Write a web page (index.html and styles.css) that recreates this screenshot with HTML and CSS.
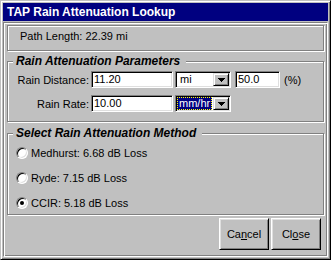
FILE: index.html
```html
<!DOCTYPE html>
<html>
<head>
<meta charset="utf-8">
<title>TAP Rain Attenuation Lookup</title>
<link rel="stylesheet" href="styles.css">
</head>
<body>
<div class="window">
  <div class="titlebar">TAP Rain Attenuation Lookup</div>
  <div class="client">
    <div class="path-panel">Path Length: 22.39 mi</div>
    <fieldset class="group group-params">
      <legend>Rain Attenuation Parameters</legend>
      <div class="row">
        <span class="lbl">Rain Distance:</span>
        <div class="edit edit-num">11.20</div>
        <div class="combo">
          <span class="combo-text">mi</span>
          <span class="drop"><svg width="7" height="4" viewBox="0 0 7 4" shape-rendering="crispEdges"><rect x="0" y="0" width="7" height="1"/><rect x="1" y="1" width="5" height="1"/><rect x="2" y="2" width="3" height="1"/><rect x="3" y="3" width="1" height="1"/></svg></span>
        </div>
        <div class="edit edit-pct">50.0</div>
        <span class="unit">(%)</span>
      </div>
      <div class="row row-second">
        <span class="lbl">Rain Rate:</span>
        <div class="edit edit-num">10.00</div>
        <div class="combo">
          <span class="combo-text"><span class="sel">mm/hr</span></span>
          <span class="drop"><svg width="7" height="4" viewBox="0 0 7 4" shape-rendering="crispEdges"><rect x="0" y="0" width="7" height="1"/><rect x="1" y="1" width="5" height="1"/><rect x="2" y="2" width="3" height="1"/><rect x="3" y="3" width="1" height="1"/></svg></span>
        </div>
      </div>
    </fieldset>
    <fieldset class="group group-method">
      <legend>Select Rain Attenuation Method</legend>
      <div class="radio-row"><span class="radio"></span><span>Medhurst: 6.68 dB Loss</span></div>
      <div class="radio-row"><span class="radio"></span><span>Ryde: 7.15 dB Loss</span></div>
      <div class="radio-row"><span class="radio checked"></span><span>CCIR: 5.18 dB Loss</span></div>
    </fieldset>
    <div class="buttons">
      <button class="btn">Ca<u>n</u>cel</button>
      <button class="btn">Cl<u>o</u>se</button>
    </div>
  </div>
</div>
</body>
</html>
```
FILE: styles.css
```css
* { box-sizing: border-box; }
html, body { margin: 0; padding: 0; }
body {
  width: 331px;
  height: 260px;
  overflow: hidden;
  background: #c0c0c0;
  font-family: "Liberation Sans", Arial, sans-serif;
  font-size: 11px;
  color: #000;
}
.window {
  width: 331px;
  height: 260px;
  background: #c0c0c0;
  border: 1px solid;
  border-color: #c0c0c0 #000 #000 #c0c0c0;
  box-shadow: inset 1px 1px #fff, inset -1px -1px #808080;
  padding: 2px;
  display: flex;
  flex-direction: column;
}
.titlebar {
  flex: none;
  height: 18px;
  background: #000080;
  color: #fff;
  font-weight: bold;
  font-size: 12px;
  line-height: 18px;
  padding-left: 4px;
}
.client {
  flex: 1;
  margin-top: 1px;
  border: 1px solid;
  border-color: #808080 #fff #fff #808080;
  box-shadow: inset 1px 1px #fff, inset -1px -1px #808080;
  padding: 2px 2px 0 3px;
  display: flex;
  flex-direction: column;
}
.path-panel {
  flex: none;
  height: 26px;
  margin-right: 1px;
  border: 1px solid #808080;
  box-shadow: inset 1px 1px #fff, 1px 1px #fff;
  padding-left: 12px;
  line-height: 20px;
}
.group {
  margin: 3px 1px 0 0;
  padding: 2px 0 9px 0;
  border: 1px solid #808080;
  box-shadow: inset 1px 1px #fff, 1px 1px #fff;
  min-width: 0;
}
.group legend {
  margin-left: 5px;
  padding: 0 6px 0 3px;
  font-weight: bold;
  font-style: italic;
  font-size: 12px;
  line-height: 15px;
  background: #c0c0c0;
}
.group-method {
  margin-top: 4px;
  padding: 3px 0 3px 0;
}
.row {
  display: flex;
  align-items: center;
  height: 17px;
}
.row-second { margin-top: 7px; }
.lbl {
  width: 81px;
  margin-right: 2px;
  text-align: right;
  white-space: nowrap;
}
.edit, .combo {
  height: 17px;
  background: #fff;
  border: 1px solid;
  border-color: #808080 #fff #fff #808080;
  box-shadow: inset 1px 1px #000, inset -1px -1px #dfdfdf;
}
.edit {
  padding-left: 2px;
  line-height: 15px;
}
.edit-num { width: 82px; }
.edit-pct { width: 45px; margin-left: 4px; }
.combo {
  width: 56px;
  margin-left: 2px;
  padding: 1px;
  display: flex;
}
.combo-text {
  flex: 1;
  padding-left: 3px;
  line-height: 13px;
}
.sel {
  display: block;
  margin-left: -3px;
  margin-right: 1px;
  height: 13px;
  background: #000080;
  color: #fff;
  border: 1px dotted #ffff00;
  padding-left: 1px;
  line-height: 11px;
}
.drop {
  width: 16px;
  height: 13px;
  background: #c0c0c0;
  border: 1px solid;
  border-color: #dfdfdf #000 #000 #dfdfdf;
  box-shadow: inset 1px 1px #fff, inset -1px -1px #808080;
  display: flex;
  align-items: center;
  justify-content: center;
}
.drop svg { display: block; fill: #000; }
.unit { margin-left: 4px; }
.radio-row {
  display: flex;
  align-items: center;
  height: 17px;
}
.radio-row + .radio-row { margin-top: 8px; }
.radio {
  position: relative;
  flex: none;
  width: 12px;
  height: 12px;
  margin-left: 8px;
  margin-right: 3px;
  border-radius: 50%;
  background: #fff;
  border: 1px solid;
  border-color: #808080 #fff #fff #808080;
  box-shadow: inset 1px 1px #000, inset -1px -1px #dfdfdf;
}
.radio.checked::after {
  content: "";
  position: absolute;
  left: 3px;
  top: 3px;
  width: 4px;
  height: 4px;
  border-radius: 50%;
  background: #000;
}
.buttons {
  display: flex;
  justify-content: flex-end;
  gap: 2px;
  margin-top: 3px;
  padding-right: 4px;
}
.btn {
  width: 50px;
  height: 32px;
  padding: 0;
  background: #c0c0c0;
  border: 1px solid;
  border-color: #fff #000 #000 #fff;
  box-shadow: inset 1px 1px #dfdfdf, inset -1px -1px #808080;
  font-family: inherit;
  font-size: 11px;
  color: #000;
}
```
